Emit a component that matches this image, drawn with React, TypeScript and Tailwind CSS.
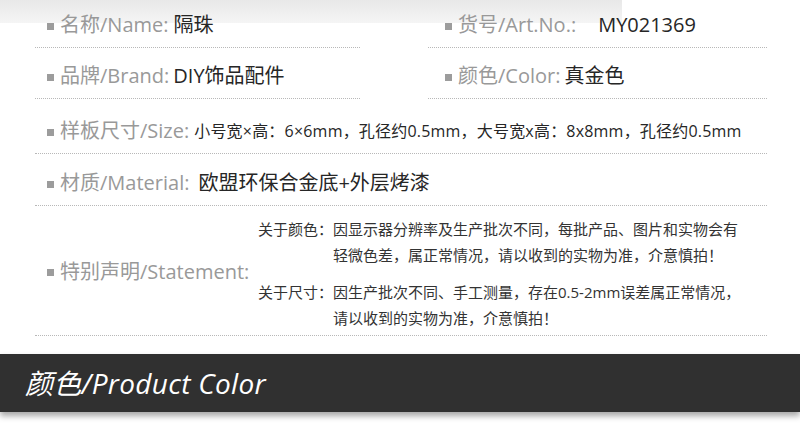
const font = "font-['Open_Sans','Noto_Sans_CJK_SC',sans-serif]";

function Bullet() {
  return <span className="inline-block w-[7px] h-[7px] bg-[#9c9c9c] mr-[6px] translate-y-[1px] shrink-0" />;
}

interface CellProps {
  label: string;
  children: React.ReactNode;
  indent?: string;
  className?: string;
}

function Cell({ label, children, indent = "pl-[12px]", className = "" }: CellProps) {
  return (
    <div className={`flex items-center border-b border-dotted border-[#b8b8b8] ${indent} ${className}`}>
      <Bullet />
      <span className="text-[20px] leading-[26px] text-[#999999] whitespace-nowrap">{label}</span>
      {children}
    </div>
  );
}

export default function App() {
  return (
    <div
      className={`w-[800px] h-[425px] bg-white overflow-hidden ${font} bg-[linear-gradient(#e8e8e8,#f5f5f5)] bg-no-repeat bg-[length:622px_23px]`}
    >
      <div className="pl-[35px] w-[767px]">
        {/* name / art no */}
        <div className="grid grid-cols-[325px_1fr] gap-x-[68px]">
          <Cell label="名称/Name:" className="h-[48px] pt-[3px]">
            <span className="ml-[5px] text-[20px] leading-[26px] text-[#262626]">隔珠</span>
          </Cell>
          <Cell label="货号/Art.No.:" indent="pl-[17px]" className="h-[48px] pt-[3px]">
            <span className="ml-[22px] text-[20px] leading-[26px] text-[#262626]">MY021369</span>
          </Cell>
        </div>

        {/* brand / color */}
        <div className="grid grid-cols-[325px_1fr] gap-x-[68px]">
          <Cell label="品牌/Brand:" className="h-[51px] pt-[6px]">
            <span className="ml-[4px] text-[20px] leading-[26px] text-[#262626]">DIY饰品配件</span>
          </Cell>
          <Cell label="颜色/Color:" indent="pl-[17px]" className="h-[51px] pt-[6px]">
            <span className="ml-[4px] text-[20px] leading-[26px] text-[#262626]">真金色</span>
          </Cell>
        </div>

        {/* size */}
        <Cell label="样板尺寸/Size:" className="h-[55px] pt-[10px]">
          <span className="ml-[5px] text-[16px] leading-[24px] text-[#262626] whitespace-nowrap tracking-[0.2px]">
            小号宽×高：6×6mm，孔径约0.5mm，大号宽x高：8x8mm，孔径约0.5mm
          </span>
        </Cell>

        {/* material */}
        <Cell label="材质/Material:" className="h-[52px] pt-[7px]">
          <span className="ml-[9px] text-[20px] leading-[26px] text-[#262626]">欧盟环保合金底+外层烤漆</span>
        </Cell>

        {/* statement */}
        <div className="flex h-[130px] border-b border-dotted border-[#b8b8b8]">
          <div className="w-[223px] shrink-0 flex items-center pl-[12px] pt-[2px]">
            <Bullet />
            <span className="text-[20px] leading-[26px] text-[#999999] whitespace-nowrap">特别声明/Statement:</span>
          </div>
          <div className="flex flex-col gap-[12px] pt-[11px] text-[15px] leading-[25.5px] text-[#333333] whitespace-nowrap">
            <div className="flex">
              <span className="w-[75px] shrink-0">关于颜色：</span>
              <span>
                因显示器分辨率及生产批次不同，每批产品、图片和实物会有
                <br />
                轻微色差，属正常情况，请以收到的实物为准，介意慎拍！
              </span>
            </div>
            <div className="flex">
              <span className="w-[75px] shrink-0">关于尺寸：</span>
              <span>
                因生产批次不同、手工测量，存在0.5-2mm误差属正常情况，
                <br />
                请以收到的实物为准，介意慎拍！
              </span>
            </div>
          </div>
        </div>
      </div>

      {/* section bar */}
      <div className="mt-[18px] h-[58px] bg-[#303030] shadow-[0_4px_6px_rgba(0,0,0,0.35)] flex items-center pl-[25px]">
        <span className="text-[28px] leading-none italic font-normal text-white whitespace-nowrap tracking-[0.3px]">颜色/Product Color</span>
      </div>
    </div>
  );
}
